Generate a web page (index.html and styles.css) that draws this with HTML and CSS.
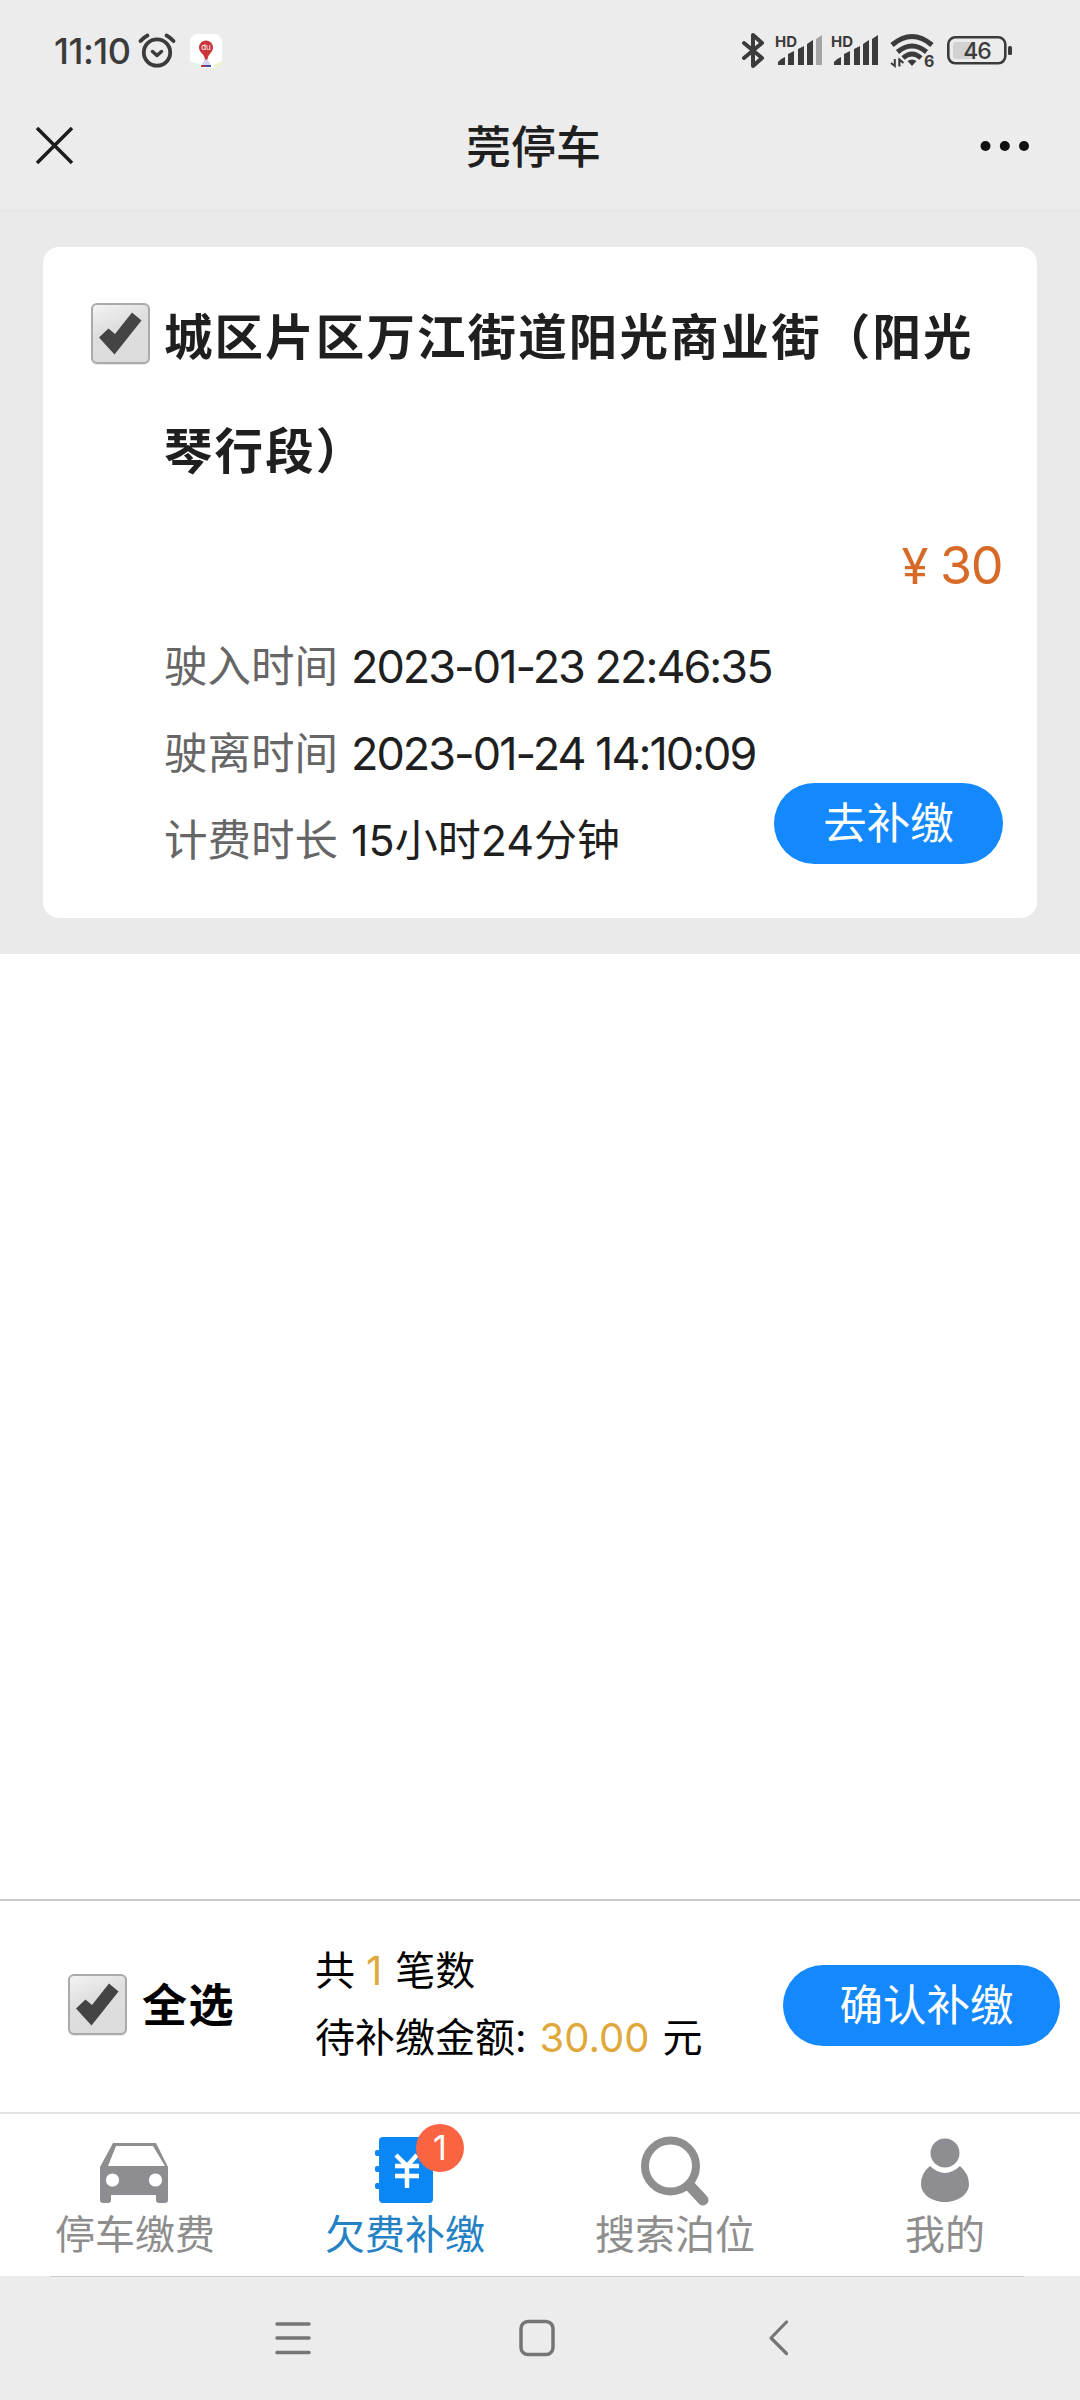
FILE: index.html
```html
<!DOCTYPE html>
<html lang="zh-CN">
<head>
  <meta charset="UTF-8" />
  <meta name="viewport" content="width=device-width, initial-scale=1" />
  <title>莞停车</title>
  <link rel="stylesheet" href="styles.css">
</head>
<body>
  <div class="status-bar">
    <span class="time">11:10</span>
    <svg class="alarm" width="38" height="36" viewBox="0 0 38 36" fill="none" stroke="#3b3b3b" stroke-linecap="round">
      <circle cx="19" cy="19.5" r="13.2" stroke-width="3.8"/>
      <path d="M14.5 18.5l4.5 4 4.5-4" stroke-width="3.5" stroke-linejoin="round"/>
      <path d="M2.5 8q3-3.5 7-5.5M35.5 8q-3-3.5-7-5.5" stroke-width="3.8"/>
    </svg>
    <svg class="map-app" width="32" height="34" viewBox="0 0 32 34">
      <rect width="32" height="34" rx="8" fill="#fff"/>
      <path d="M0 27l10 3v4H6q-5-1-6-7z" fill="#e4f3ea"/>
      <path d="M24 31l8-4q-1 6-7 7z" fill="#edf3cc"/>
      <path d="M12 31l2.5-6h3l3 6z" fill="#d5d5ee"/>
      <path d="M9 13.500a7 7 0 1 1 14 0c0 5-5 6-5.5 12h-2.5c-.5-6-6-7-6-12z" fill="#c9353a"/>
      <path d="M11 32h10" stroke="#4a4d9d" stroke-width="2"/>
      <path d="M11 32h4" stroke="#b33745" stroke-width="2"/>
      <text x="16" y="16" class="du">du</text>
    </svg>
    <svg class="bluetooth" width="24" height="38" viewBox="0 0 24 38" fill="none" stroke="#3b3b3b" stroke-width="4" stroke-linejoin="round" stroke-linecap="round">
      <path d="M2 11l18 15-9 8V3l9 8L2 26"/>
    </svg>
    <svg class="signal" width="48" height="32" viewBox="0 0 48 32" fill="#3b3b3b">
      <text x="-1" y="12" class="hd">HD</text>
      <path d="M2 30V27q2-3 7-5v8z"/>
      <path d="M12 19l6-3v14h-6zM22 14l6-3v19h-6zM31 9l6-4v25h-6z"/>
      <path d="M40 4l6-4v30h-6z" fill="#a5a5a5"/>
    </svg>
    <svg class="signal" width="48" height="32" viewBox="0 0 48 32" fill="#3b3b3b">
      <text x="-1" y="12" class="hd">HD</text>
      <path d="M2 30V27q2-3 7-5v8z"/>
      <path d="M12 19l6-3v14h-6zM22 14l6-3v19h-6zM31 9l6-4v25h-6zM40 4l6-4v30h-6z"/>
    </svg>
    <svg class="wifi" width="44" height="34" viewBox="0 0 44 34" fill="none" stroke="#3b3b3b">
      <path d="M2 11q20-17 40 0M7.5 18q14.500-12 29 0M13 24q9-8 18 0" stroke-width="5"/>
      <path d="M17.5 27q4.500-3 9 0l-4.500 5z" fill="#3b3b3b" stroke="none"/>
      <path d="M4.8 25v7L1 29M9.3 25v7M13.500 29l-4-3.500v7" stroke-width="2"/>
      <text x="34" y="33" class="wifi-six">6</text>
    </svg>
    <svg class="battery" width="66" height="30" viewBox="0 0 66 30" fill="none">
      <rect x="1.3" y="1.3" width="57" height="26" rx="7" stroke="#3b3b3b" stroke-width="2.6"/>
      <rect x="6" y="6" width="22" height="17" rx="3" fill="#d2d2d2"/>
      <rect x="61" y="10" width="4" height="9" rx="1.5" fill="#3b3b3b"/>
      <text x="30" y="23" class="battery-text">46</text>
    </svg>
  </div>

  <div class="header">
    <svg class="close" width="38" height="38" viewBox="0 0 38 38" fill="none" stroke="#1c1c1c" stroke-width="3.5">
      <path d="M1 1l35 35M36 1L1 36"/>
    </svg>
    <h1>莞停车</h1>
    <svg class="more" width="50" height="10" viewBox="0 0 50 10" fill="#111">
      <circle cx="5.5" cy="5" r="5"/><circle cx="24.8" cy="5" r="5"/><circle cx="44" cy="5" r="5"/>
    </svg>
  </div>

  <div class="list">
    <div class="card">
      <div class="card-title">
        <svg class="checkbox" width="61" height="63" viewBox="0 0 61 63">
          <defs>
            <linearGradient id="box" x1="0" y1="0" x2="0.4" y2="1">
              <stop offset="0" stop-color="#f4f4f4"/><stop offset="0.5" stop-color="#dedede"/><stop offset="1" stop-color="#dcdcdc"/>
            </linearGradient>
          </defs>
          <rect x="1" y="3" width="59" height="59" rx="6" fill="#e9e9e9"/>
          <rect x="2" y="1" width="57" height="59" rx="5" fill="url(#box)" stroke="#aaa" stroke-width="2"/>
          <path d="M9 34.5l9.500-9 6.500 5.500 17-21.500 9.500 8-27 34z" fill="#444"/>
        </svg>
        <h2>城区片区万江街道阳光商业街（阳光琴行段）</h2>
      </div>
      <div class="price"><span>¥</span>30</div>
      <div class="detail">
        <div class="rows">
          <div class="row"><label>驶入时间</label><span class="date">2023-01-23 22:46:35</span></div>
          <div class="row"><label>驶离时间</label><span class="date">2023-01-24 14:10:09</span></div>
          <div class="row"><label>计费时长</label><span class="duration">15小时24分钟</span></div>
        </div>
        <button class="pay">去补缴</button>
      </div>
    </div>
  </div>

  <div class="blank"></div>

  <div class="total-bar">
    <svg class="checkbox" width="61" height="63" viewBox="0 0 61 63">
      <rect x="1" y="3" width="59" height="59" rx="6" fill="#e9e9e9"/>
      <rect x="2" y="1" width="57" height="59" rx="5" fill="url(#box)" stroke="#aaa" stroke-width="2"/>
      <path d="M9 34.5l9.500-9 6.500 5.500 17-21.500 9.500 8-27 34z" fill="#444"/>
    </svg>
    <strong class="all">全选</strong>
    <div class="sum">
      <p>共<em class="count">1</em>笔数</p>
      <p>待补缴金额:<em class="amount">30.00</em>元</p>
    </div>
    <button class="confirm">确认补缴</button>
  </div>

  <div class="tabs">
    <div class="tab">
      <svg width="70" height="68" viewBox="0 0 70 68" fill="#8e8e92">
        <path fill-rule="evenodd" d="M13 7h43l12 24v33q0 3-3 3h-6q-3 0-3-3v-5H11v5q0 3-3 3H3q-3 0-3-3V31zM16 10L8 30h57L53 10z"/>
        <circle cx="12.5" cy="44" r="6.6" fill="#fff"/><circle cx="55.5" cy="44" r="6.6" fill="#fff"/>
      </svg>
      <span>停车缴费</span>
    </div>
    <div class="tab active">
      <div class="icon">
        <svg width="60" height="68" viewBox="0 0 60 68" fill="#0b87f5">
          <rect x="4" y="1" width="54" height="66" rx="4"/>
          <rect x="0" y="14" width="6" height="6" rx="2"/><rect x="0" y="30" width="6" height="6" rx="2"/><rect x="0" y="47" width="6" height="6" rx="2"/>
          <path d="M21 19l11 11 10-11M20 30h24M20 40h24M32 30v22" fill="none" stroke="#fff" stroke-width="4.5"/>
        </svg>
        <span class="badge">1</span>
      </div>
      <span>欠费补缴</span>
    </div>
    <div class="tab">
      <svg width="68" height="68" viewBox="0 0 68 68" fill="none" stroke="#8e8e8e">
        <circle cx="29.5" cy="30" r="25.5" stroke-width="8"/>
        <path d="M49 50l13 14" stroke-width="11" stroke-linecap="round"/>
      </svg>
      <span>搜索泊位</span>
    </div>
    <div class="tab">
      <svg width="50" height="68" viewBox="0 0 50 68" fill="#8e8e92">
        <circle cx="25" cy="17" r="14.5"/>
        <path d="M10 30q15 14 30 0 9 8 9 18c0 11-12 18-24 18S1 59 1 48q0-11 9-18z"/>
      </svg>
      <span>我的</span>
    </div>
  </div>

  <div class="nav-bar">
    <svg width="36" height="38" viewBox="0 0 36 38" stroke="#757575" stroke-width="3.5" stroke-linecap="round">
      <path d="M2 5h32M2 19h32M2 33.500h32"/>
    </svg>
    <svg class="home" width="36" height="38" viewBox="0 0 36 38" fill="none" stroke="#757575" stroke-width="3.5">
      <rect x="2" y="2.5" width="32" height="33" rx="7"/>
    </svg>
    <svg width="20" height="38" viewBox="0 0 20 38" fill="none" stroke="#757575" stroke-width="3.2" stroke-linecap="round" stroke-linejoin="round">
      <path d="M17.5 3L2 19l15.500 15.500"/>
    </svg>
  </div>
</body>
</html>
```
FILE: styles.css
```css
* {
  box-sizing: border-box;
}

body {
  margin: 0;
  width: 1080px;
  height: 2400px;
  display: flex;
  flex-direction: column;
  overflow: hidden;
  background: #fff;
  color: #1f1f1f;
  font-family: Inter, "Noto Sans CJK SC", sans-serif;
}

h1,
h2,
p {
  margin: 0;
}

svg {
  display: block;
  flex: none;
  overflow: visible;
}

/* 状态栏 */
.status-bar {
  height: 96px;
  padding: 6px 67px 0 54px;
  display: flex;
  align-items: center;
  background: #ececec;
  color: #3b3b3b;
}

.time {
  width: 84px;
  font-size: 36px;
  font-weight: 500;
  letter-spacing: -0.5px;
  white-space: nowrap;
}

.map-app {
  margin-left: 14px;
}

.du {
  font-size: 8px;
  fill: #fff;
  text-anchor: middle;
}

.bluetooth {
  margin-left: auto;
}

.signal {
  margin-left: 10px;
}

.signal + .signal {
  margin-left: 8px;
}

.hd {
  font-size: 15px;
  font-weight: 700;
}

.wifi {
  margin-left: 10px;
}

.wifi-six {
  font-size: 16px;
  font-weight: 700;
  fill: #3b3b3b;
  stroke: none;
}

.battery {
  margin-left: 13px;
}

.battery-text {
  font-size: 23px;
  font-weight: 500;
  fill: #3b3b3b;
  text-anchor: middle;
  letter-spacing: -1px;
}

/* 标题栏 */
.header {
  height: 116px;
  padding: 0 50px 14px 36px;
  display: flex;
  align-items: center;
  justify-content: space-between;
  background: #ececec;
  border-bottom: 2px solid #e6e6e6;
}

.header h1 {
  padding: 3px 0 0 13px;
  font-size: 45px;
  font-weight: 500;
  line-height: 60px;
}

/* 欠费列表 */
.list {
  height: 742px;
  padding: 35px 43px 36px;
  background: #eaeaea;
}

.card {
  height: 671px;
  padding: 34px 34px 0 47px;
  background: #fff;
  border-radius: 16px;
}

.card-title {
  display: flex;
  align-items: flex-start;
}

.card-title .checkbox {
  margin: 22px 13px 0 0;
}

.card-title h2 {
  width: 815px;
  font-size: 48.5px;
  font-weight: 700;
  line-height: 114px;
  letter-spacing: 2.1px;
}

.price {
  height: 114px;
  padding-right: 1px;
  line-height: 114px;
  font-size: 52px;
  letter-spacing: -1.5px;
  text-align: right;
  color: #d86a27;
}

.price span {
  margin-right: 13px;
  font-size: 49px;
}

.detail {
  display: flex;
  align-items: flex-start;
  justify-content: space-between;
  padding-left: 74px;
}

.row {
  display: flex;
  height: 87px;
  align-items: center;
  line-height: 87px;
  white-space: nowrap;
}

.row label {
  width: 187px;
  font-size: 43.5px;
  color: #666;
}

.date {
  font-size: 45px;
  letter-spacing: -2px;
}

.duration {
  font-size: 43px;
}

button {
  height: 81px;
  padding: 0 0 6px;
  border: 0;
  border-radius: 41px;
  background: #1488fd;
  color: #fff;
  font-family: inherit;
  font-size: 43.5px;
}

.pay {
  width: 229px;
  margin-top: 160px;
}

.blank {
  flex: 1;
}

/* 合计 */
.total-bar {
  height: 213px;
  padding: 0 20px 3px 67px;
  display: flex;
  align-items: center;
  border-top: 2px solid #ccc;
  color: #000;
}

.all {
  width: 173px;
  margin-left: 14px;
  padding-bottom: 6px;
  font-size: 45px;
  letter-spacing: 1.5px;
}

.sum {
  padding-bottom: 2px;
  font-size: 40px;
  line-height: 67px;
  white-space: nowrap;
}

.sum em {
  font-style: normal;
  color: #dfa83a;
}

.count {
  margin: 0 13px 0 11px;
}

.amount {
  margin: 0 13px;
}

.confirm {
  width: 277px;
  margin-left: auto;
  padding-left: 10px;
}

/* 底部菜单 */
.tabs {
  height: 164px;
  padding-top: 22px;
  display: flex;
  border-top: 2px solid #e2e2e2;
  color: #8e8e8e;
}

.tab {
  width: 270px;
  display: flex;
  flex-direction: column;
  align-items: center;
  font-size: 40px;
  line-height: 62px;
}

.active {
  color: #2481c4;
}

.icon {
  position: relative;
}

.badge {
  position: absolute;
  left: 41px;
  top: -12px;
  width: 48px;
  height: 48px;
  border-radius: 50%;
  background: #fb6443;
  color: #fff;
  font-size: 34px;
  line-height: 48px;
  text-align: center;
}

/* 系统导航 */
.nav-bar {
  height: 124px;
  padding: 0 291px 0 275px;
  display: flex;
  align-items: center;
  justify-content: space-between;
  background: #ececec linear-gradient(#cdcdcd, #cdcdcd) 50px 0 / 974px 1px no-repeat;
}

.home {
  margin-right: 6px;
}
```
